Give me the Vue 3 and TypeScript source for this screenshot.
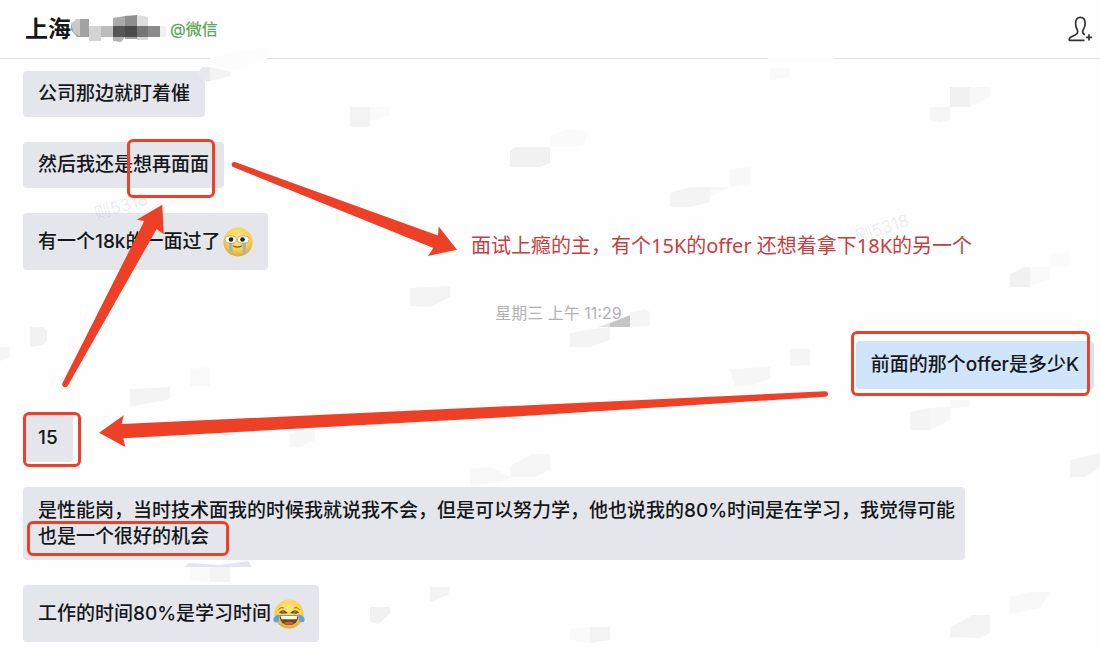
<script setup lang="ts">
interface Patch {
  points: string
  fill: string
}

const nameBlocks: Patch[] = [
  { points: '0,9 6,4 18,4 18,22 6,22 0,15', fill: '#a3a3a3' },
  { points: '0,9 6,4 9,4 9,21 3,18', fill: '#c9c9c9' },
  { points: '18,11 30,11 30,26 18,26', fill: '#d3d3d3' },
  { points: '30,11 42,11 42,22 30,22', fill: '#bcbcbc' },
  { points: '42,3 54,1 54,11 42,11', fill: '#aaaaaa' },
  { points: '42,11 54,11 54,22 42,22', fill: '#555555' },
  { points: '42,22 54,22 50,27 42,26', fill: '#b2b2b2' },
  { points: '54,1 66,0 66,11 54,11', fill: '#8e8e8e' },
  { points: '54,11 66,11 66,22 54,22', fill: '#494949' },
  { points: '54,22 66,22 66,24 54,24', fill: '#a0a0a0' },
  { points: '66,0 77,2 77,11 66,11', fill: '#dedede' },
  { points: '66,11 77,11 77,22 66,22', fill: '#757575' },
  { points: '66,22 77,22 77,25 66,25', fill: '#d8d8d8' },
  { points: '77,11 89,11 89,22 77,22', fill: '#8b8b8b' },
  { points: '89,11 95,11 95,22 89,22', fill: '#f0f0f0' },
]

const smudges: Patch[] = [
  { points: '198,72 203,67 230,67 230,76 206,82 203,80', fill: '#f3f3f4' },
  { points: '198,72 203,67 210,67 210,81 203,81', fill: '#e7e9ed' },
  { points: '210,58 262,47 268,50 266,59 230,72 210,67', fill: '#fcfcfc' },
  { points: '350,107 370,107 370,127 350,127', fill: '#f3f3f3' },
  { points: '370,107 390,107 390,115 370,121', fill: '#fafafa' },
  { points: '510,151 515,147 550,147 550,163 540,167 510,167', fill: '#f1f1f1' },
  { points: '550,135 570,129 588,132 584,145 575,147 550,147', fill: '#fafafa' },
  { points: '670,193 690,187 710,187 710,202 690,207 670,207', fill: '#f4f4f4' },
  { points: '730,169 750,167 750,184 730,187', fill: '#f8f8f8' },
  { points: '710,187 730,187 710,197', fill: '#f8f8f8' },
  { points: '770,68 790,68 790,77 770,80', fill: '#f9f9f9' },
  { points: '950,87 970,87 970,107 950,107', fill: '#f0f0f0' },
  { points: '970,87 990,87 990,97 970,107', fill: '#f8f8f8' },
  { points: '930,107 950,107 950,119 940,123 930,120', fill: '#f6f6f6' },
  { points: '410,288 450,286 450,297 430,307 410,306', fill: '#f3f3f3' },
  { points: '570,333 593,329 610,327 610,340 590,347 570,347', fill: '#f4f4f4' },
  { points: '630,313 645,309 650,312 650,326 630,327', fill: '#f5f5f5' },
  { points: '598,327 610,323 610,327', fill: '#e2e2e2' },
  { points: '610,323 630,315 630,327 610,327', fill: '#c5c5c5' },
  { points: '790,349 810,349 810,365 790,366', fill: '#f5f5f5' },
  { points: '730,369 770,367 770,378 750,386 735,386', fill: '#f6f6f6' },
  { points: '1010,274 1025,267 1030,267 1030,287 1010,287', fill: '#f1f1f1' },
  { points: '1030,267 1050,267 1050,279 1030,286', fill: '#f9f9f9' },
  { points: '1050,255 1070,251 1070,266 1050,267', fill: '#fbfbfb' },
  { points: '130,389 170,387 170,399 130,407', fill: '#f4f4f4' },
  { points: '190,369 210,367 210,386 190,386', fill: '#f9f9f9' },
  { points: '30,327 43,327 47,331 47,340 43,345 30,347', fill: '#f2f2f2' },
  { points: '0,347 10,347 10,357 0,361', fill: '#f6f6f6' },
  { points: '290,435 297,430 315,428 315,440 300,447 290,447', fill: '#f7f7f7' },
  { points: '910,412 930,408 930,430 910,430', fill: '#f4f4f4' },
  { points: '930,408 950,407 950,420 930,430', fill: '#f7f7f7' },
  { points: '950,400 970,400 970,407 950,408', fill: '#f8f8f8' },
  { points: '510,466 532,454 550,454 550,470 535,477 510,477', fill: '#f6f6f6' },
  { points: '470,469 490,467 510,477 505,481 470,486', fill: '#f8f8f8' },
  { points: '1070,460 1090,455 1100,453 1100,468 1085,477 1070,477', fill: '#f4f4f4' },
  { points: '184,567 189,563 220,565 248,561 252,567', fill: '#e3e6ee' },
  { points: '190,567 210,567 210,582 190,580', fill: '#fafafa' },
  { points: '210,567 230,567 230,582 210,582', fill: '#f3f3f3' },
  { points: '430,587 450,587 448,595 430,602', fill: '#f3f3f3' },
  { points: '370,607 390,607 390,614 378,624 370,622', fill: '#f1f1f1' },
  { points: '950,628 972,615 990,615 990,633 980,638 950,637', fill: '#f4f4f4' },
  { points: '1010,597 1030,592 1050,592 1040,608 1010,614', fill: '#f8f8f8' },
  { points: '551,672 570,661 590,661 590,677 551,677', fill: '#fafafa' },
  { points: '570,629 590,627 590,643 570,640', fill: '#f9f9f9' },
  { points: '590,627 610,627 610,640 590,643', fill: '#f3f3f3' },
]
</script>

<template>
  <main class="chat">
    <header class="top">
      <h1 class="name">上海</h1>
      <svg class="masked" viewBox="0 0 95 28" aria-hidden="true">
        <polygon v-for="(b, i) in nameBlocks" :key="i" :points="b.points" :fill="b.fill" />
      </svg>
      <span class="source">@微信</span>
      <button class="add" type="button" aria-label="添加成员">
        <svg viewBox="0 0 26 26" aria-hidden="true">
          <path
            d="M16.5 24.3H1.4C.8 22.4 1.6 21.6 3 20.9L7.6 18.7C9.4 17.8 10 16.6 9.6 14.9C9.3 13.4 7.6 11.8 7.6 7.4C7.6 3.4 9.4 1.4 12.4 1.4S17.2 3.4 17.2 7.4C17.2 11.8 15.2 12.8 14.8 14.9C14.4 16.8 14.8 17.9 16.8 18.8M21 18.2V24.4M17.9 21.3H24.1"
          />
        </svg>
      </button>
    </header>

    <section class="messages">
      <p class="bubble">公司那边就盯着催</p>
      <p class="bubble">然后我还是<span class="marked">想再面面<i class="ring ring-again"></i></span></p>
      <p class="bubble with-face">
        有一个18k的一面过了
        <svg class="face" viewBox="0 0 32 32" role="img" aria-label="流泪">
          <defs>
            <radialGradient id="skin" cx="50%" cy="35%" r="65%">
              <stop offset="0" stop-color="#ffe885" />
              <stop offset=".65" stop-color="#fbd050" />
              <stop offset="1" stop-color="#e6a43a" />
            </radialGradient>
          </defs>
          <circle cx="16" cy="16" r="14.5" fill="url(#skin)" />
          <path d="M7 16h3.500v11.500l-3.500-3.500zM20.500 16h3.500v10l-3.500 3.500z" fill="#9fb9b2" />
          <rect x="3" y="10" width="11.500" height="7" rx="3.500" fill="#fff" stroke="#9b8952" stroke-width=".6" />
          <rect x="15.500" y="10" width="11.500" height="7" rx="3.500" fill="#fff" stroke="#9b8952" stroke-width=".6" />
          <circle cx="9" cy="13.500" r="2.300" fill="#27221c" />
          <circle cx="20.500" cy="13.500" r="2.300" fill="#27221c" />
          <path d="M11.500 20q4 2.400 8 0" fill="none" stroke="#8b5a1c" stroke-width="1.300" stroke-linecap="round" />
        </svg>
      </p>
      <time class="when">星期三 上午 11:29</time>
      <p class="bubble mine">前面的那个offer是多少K<i class="ring ring-offer"></i></p>
      <p class="bubble short">15<i class="ring ring-salary"></i></p>
      <p class="bubble long">
        是性能岗，当时技术面我的时候我就说我不会，但是可以努力学，他也说我的80%时间是在学习，我觉得可能<br />
        <span class="marked">也是一个很好的机会<i class="ring ring-chance"></i></span>
      </p>
      <p class="bubble with-face">
        工作的时间80%是学习时间
        <svg class="face" viewBox="0 0 32 32" role="img" aria-label="笑哭">
          <circle cx="16" cy="16" r="14.5" fill="url(#skin)" />
          <path d="M5.5 11.5q2.5-3 5.5-1.5M26.5 11.5q-2.5-3-5.5-1.5" fill="none" stroke="#9c6a20" stroke-width="1" />
          <path d="M7 14.5q3-3.5 6.5.2l-5 .3M25 14.5q-3-3.5-6.5.2l5 .3" fill="none" stroke="#6e4516" stroke-width="1.3" stroke-linecap="round" />
          <path d="M6.5 17.5h19q-.6 9.5-9.5 9.5t-9.5-9.5z" fill="#73421b" />
          <path d="M7.5 18h17l-1 3.2h-15z" fill="#fff" />
          <path d="M10.5 25q5.5-3 11 0-5.5 3.6-11 0z" fill="#b9653a" />
          <path d="M6.5 16.5c-5 1-6.5 3.5-6 6s4 2.5 5.2.3c.8-1.6 1-3.8.8-6.3zM25.500 16.500c5 1 6.500 3.500 6 6s-4 2.500-5.200.3c-.8-1.600-1-3.800-.8-6.300z" fill="#5da4dc" />
        </svg>
      </p>
    </section>

    <svg class="smudges" viewBox="0 0 1100 654" aria-hidden="true">
      <path d="M768 57h66v5h-66z" fill="#fdfdfd" />
      <polygon v-for="(s, i) in smudges" :key="i" :points="s.points" :fill="s.fill" />
      <g class="stamp">
        <text transform="translate(858 243) rotate(-19)">刚5318</text>
        <text transform="translate(96 220) rotate(-17)">则5318</text>
      </g>
    </svg>

    <svg class="arrows" viewBox="0 0 1100 654" aria-hidden="true">
      <path d="M235 162L438 235.5L438.7 226.5L457 249.7L428 256L433.3 248L232.5 166.8Q231 164.5 232 163Q233 161.600 235 162Z" />
      <path d="M62.5 383L144.3 221L136.7 219.7L162.3 204.7L163.7 234.3L156.7 229L68 385.5Q66.5 388 64 387Q61.5 386 62.5 383Z" />
      <path d="M99 432.7L123.7 415.3L121.7 424L500 406.5L825 391.3Q828 391.3 828 394Q828 396.5 825 396.7L500 417.5L123.3 438.3L125.3 447Z" />
    </svg>

    <p class="note">面试上瘾的主，有个15K的offer 还想着拿下18K的另一个</p>
  </main>
</template>

<style>
body {
  margin: 0;
  background: #fefefe;
}
</style>

<style scoped>
.chat {
  position: relative;
  min-height: 100vh;
  overflow: hidden;
  box-sizing: border-box;
  color: #15171b;
  font-family: Inter, "Noto Sans CJK SC", sans-serif;
  font-size: 19px;
  font-weight: 500;
  line-height: 26px;
}
.top {
  display: flex;
  align-items: center;
  height: 58px;
  padding: 0 6px 0 25px;
  border-bottom: 1px solid #e2e2e2;
}
.name {
  margin: 0;
  font-size: 23px;
  font-weight: 600;
}
.masked {
  width: 95px;
  height: 28px;
}
.source {
  margin-left: 4px;
  color: #5ea75a;
  font-size: 16px;
}
.add {
  margin-left: auto;
  padding: 0;
  border: 0;
  background: none;
}
.add svg {
  display: block;
  width: 26px;
  height: 26px;
  fill: none;
  stroke: #333;
  stroke-width: 1.7;
  stroke-linejoin: round;
}
.messages {
  display: flex;
  flex-direction: column;
  align-items: flex-start;
  gap: 25px;
  padding: 12px 6px 11px 23px;
}
.bubble {
  position: relative;
  margin: 0;
  padding: 10px 15px;
  border-radius: 4px;
  background: #e4e6ec;
}
.with-face {
  display: flex;
  align-items: center;
  gap: 2px;
  padding: 13px 14px 12px 15px;
}
.face {
  width: 32px;
  height: 32px;
}
.when {
  align-self: center;
  margin: 5px 0 -10px;
  color: #b2b2b2;
  font-size: 16px;
  font-weight: 400;
}
.mine {
  align-self: flex-end;
  padding: 11px 15px;
  background: #d0e4fa;
}
.short {
  padding: 11px 15px;
}
.long {
  padding: 11px 10px 10px 15px;
}
.marked {
  position: relative;
}
.ring {
  position: absolute;
  z-index: 3;
  border: 3px solid #ee4026;
  border-radius: 6px;
}
.ring-again {
  inset: -14px -6px -22px -6px;
}
.ring-offer {
  inset: -10px 4px -7px -5px;
}
.ring-salary {
  inset: -2px -8px -5px 0;
}
.ring-chance {
  inset: -4px -20px -8px -11px;
}
.smudges,
.arrows {
  position: absolute;
  top: 0;
  left: 0;
  width: 1100px;
  height: 654px;
  pointer-events: none;
}
.arrows {
  fill: #ee4026;
}
.stamp {
  fill: #8d8d8d;
  fill-opacity: 0.16;
  font-size: 17px;
  font-weight: 400;
}
.note {
  position: absolute;
  top: 233px;
  left: 471px;
  margin: 0;
  color: #c43f41;
  font-family: "Noto Sans", "Noto Sans CJK SC", sans-serif;
  font-size: 20px;
  font-weight: 400;
  white-space: nowrap;
}
</style>
